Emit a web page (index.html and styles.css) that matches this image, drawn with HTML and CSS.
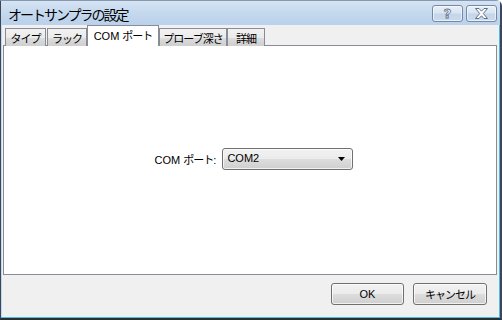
FILE: index.html
```html
<!DOCTYPE html>
<html lang="ja">
<head>
<meta charset="utf-8">
<title>オートサンプラの設定</title>
<link rel="stylesheet" href="styles.css">
</head>
<body>
<div class="window">
  <div class="titlebar">
    <span class="title">オートサンプラの設定</span>
    <div class="caption-btns">
      <button class="cap-btn help"><span class="help-glyph">?</span></button>
      <button class="cap-btn close">
        <svg width="15" height="11" viewBox="0 0 15 11"><path d="M1.5 0.5 H5 L7.5 3.2 L10 0.5 H13.5 L9.3 5.5 L13.5 10.5 H10 L7.5 7.8 L5 10.5 H1.5 L5.7 5.5 Z" fill="#ffffff" stroke="#5d6f88" stroke-width="1" stroke-linejoin="round"/></svg>
      </button>
    </div>
  </div>
  <div class="client">
    <div class="tabs">
      <div class="tab t1"><span class="jp">タイプ</span></div>
      <div class="tab t2"><span class="jp">ラック</span></div>
      <div class="tab t3 active"><span>COM&nbsp;<span class="jp">ポート</span></span></div>
      <div class="tab t4"><span class="jp">プローブ深さ</span></div>
      <div class="tab t5"><span class="jp">詳細</span></div>
    </div>
    <div class="panel">
      <div class="field">
        <label class="label">COM&nbsp;<span class="jp">ポート</span>:</label>
        <div class="select">
          <span class="select-text">COM2</span>
          <svg class="arrow" width="7" height="4" viewBox="0 0 7 4"><path d="M0 0 H7 L3.5 4 Z" fill="#000"/></svg>
        </div>
      </div>
    </div>
    <div class="button-row">
      <button class="btn ok">OK</button>
      <button class="btn cancel"><span class="jp">キャンセル</span></button>
    </div>
  </div>
</div>
</body>
</html>
```

FILE: styles.css
```css
* { box-sizing: border-box; }
html, body { margin: 0; padding: 0; }
body {
  width: 502px;
  height: 320px;
  overflow: hidden;
  background: #ffffff;
  font-family: "Liberation Sans", "Noto Sans CJK JP", sans-serif;
  font-size: 11px;
  color: #000;
}
.window {
  width: 502px;
  height: 320px;
  display: flex;
  flex-direction: column;
  border-left: 1px solid #3c4656;
  border-right: 2px solid #3c4656;
  border-bottom: 2px solid #2a2f36;
  border-top: 1px solid #8799ae;
  border-top-right-radius: 6px;
  background: #c3d8ee;
  padding: 0 1px 1px 1px;
  box-shadow: inset -1px -1px 0 #4cbbe6;
}
.titlebar {
  height: 24px;
  flex: none;
  display: flex;
  align-items: center;
  justify-content: space-between;
  background: linear-gradient(#d6e4f4 0%, #c6d9ee 45%, #b9d1ea 100%);
  margin: 0 -1px;
  padding: 0 3px 0 7px;
}
.title {
  font-family: "Noto Sans CJK JP", sans-serif;
  font-size: 14px;
  letter-spacing: -2px;
  color: #000;
  line-height: 1;
  padding-top: 1px;
}
.caption-btns {
  display: flex;
  gap: 3px;
  align-items: center;
  margin-top: 1px;
}
.cap-btn {
  width: 31px;
  height: 17px;
  padding: 0;
  margin: 0;
  border: 1px solid #7489a6;
  border-radius: 3px;
  background: linear-gradient(#e8eff8 0%, #d8e4f2 48%, #c5d6ea 52%, #c9daee 100%);
  box-shadow: inset 0 0 0 1px rgba(255,255,255,0.6);
  display: flex;
  align-items: center;
  justify-content: center;
}
.help-glyph {
  font-family: "DejaVu Sans", sans-serif;
  font-weight: bold;
  font-size: 13px;
  line-height: 1;
  color: #ffffff;
  -webkit-text-stroke: 0.8px #5d6f88;
}
.client {
  flex: 1;
  display: flex;
  flex-direction: column;
  background: #f0f0f0;
  padding: 0 2px 0 1px;
}
.tabs {
  display: flex;
  align-items: flex-end;
  height: 21px;
  padding-left: 2px;
  position: relative;
  z-index: 1;
}
.tab {
  height: 18px;
  border: 1px solid #898c95;
  border-bottom: none;
  background: linear-gradient(#f2f2f2 0%, #ebebeb 50%, #dddddd 51%, #cfcfcf 100%);
  display: flex;
  align-items: center;
  justify-content: center;
  white-space: nowrap;
  padding-top: 1px;
}
.jp {
  font-family: "Noto Sans CJK JP", sans-serif;
  letter-spacing: -1px;
}
.t1 { width: 41px; margin-right: 1px; }
.t2 { width: 40px; }
.t3 { width: 72px; }
.t4 { width: 68px; }
.t5 { width: 38px; }
.tab.active {
  height: 21px;
  background: #ffffff;
  padding-top: 0;
  padding-bottom: 2px;
  border-color: #898c95;
}
.panel {
  height: 230px;
  margin-top: -1px;
  background: #ffffff;
  border: 1px solid #898c95;
  display: flex;
  align-items: center;
  justify-content: center;
}
.field {
  display: flex;
  align-items: center;
  gap: 6px;
  margin-left: 8px;
  margin-top: -3px;
}
.label {
  white-space: nowrap;
}
.select {
  width: 131px;
  height: 22px;
  border: 1px solid #707070;
  border-radius: 3px;
  background: linear-gradient(#f2f2f2 0%, #ebebeb 50%, #dddddd 51%, #cfcfcf 100%);
  box-shadow: inset 0 0 0 1px rgba(255,255,255,0.7);
  display: flex;
  align-items: center;
  justify-content: space-between;
  padding: 0 7px 0 4px;
}
.select-text { line-height: 1; }
.button-row {
  display: flex;
  justify-content: flex-end;
  gap: 9px;
  padding-right: 10px;
  margin-top: 8px;
}
.btn {
  width: 73px;
  height: 22px;
  margin: 0;
  padding: 0;
  border: 1px solid #707070;
  border-radius: 3px;
  background: linear-gradient(#f2f2f2 0%, #ebebeb 50%, #dddddd 51%, #cfcfcf 100%);
  box-shadow: inset 0 0 0 1px rgba(255,255,255,0.7);
  font-family: "Liberation Sans", "Noto Sans CJK JP", sans-serif;
  font-size: 11px;
  color: #000;
}
.btn.cancel { width: 74px; }
```
